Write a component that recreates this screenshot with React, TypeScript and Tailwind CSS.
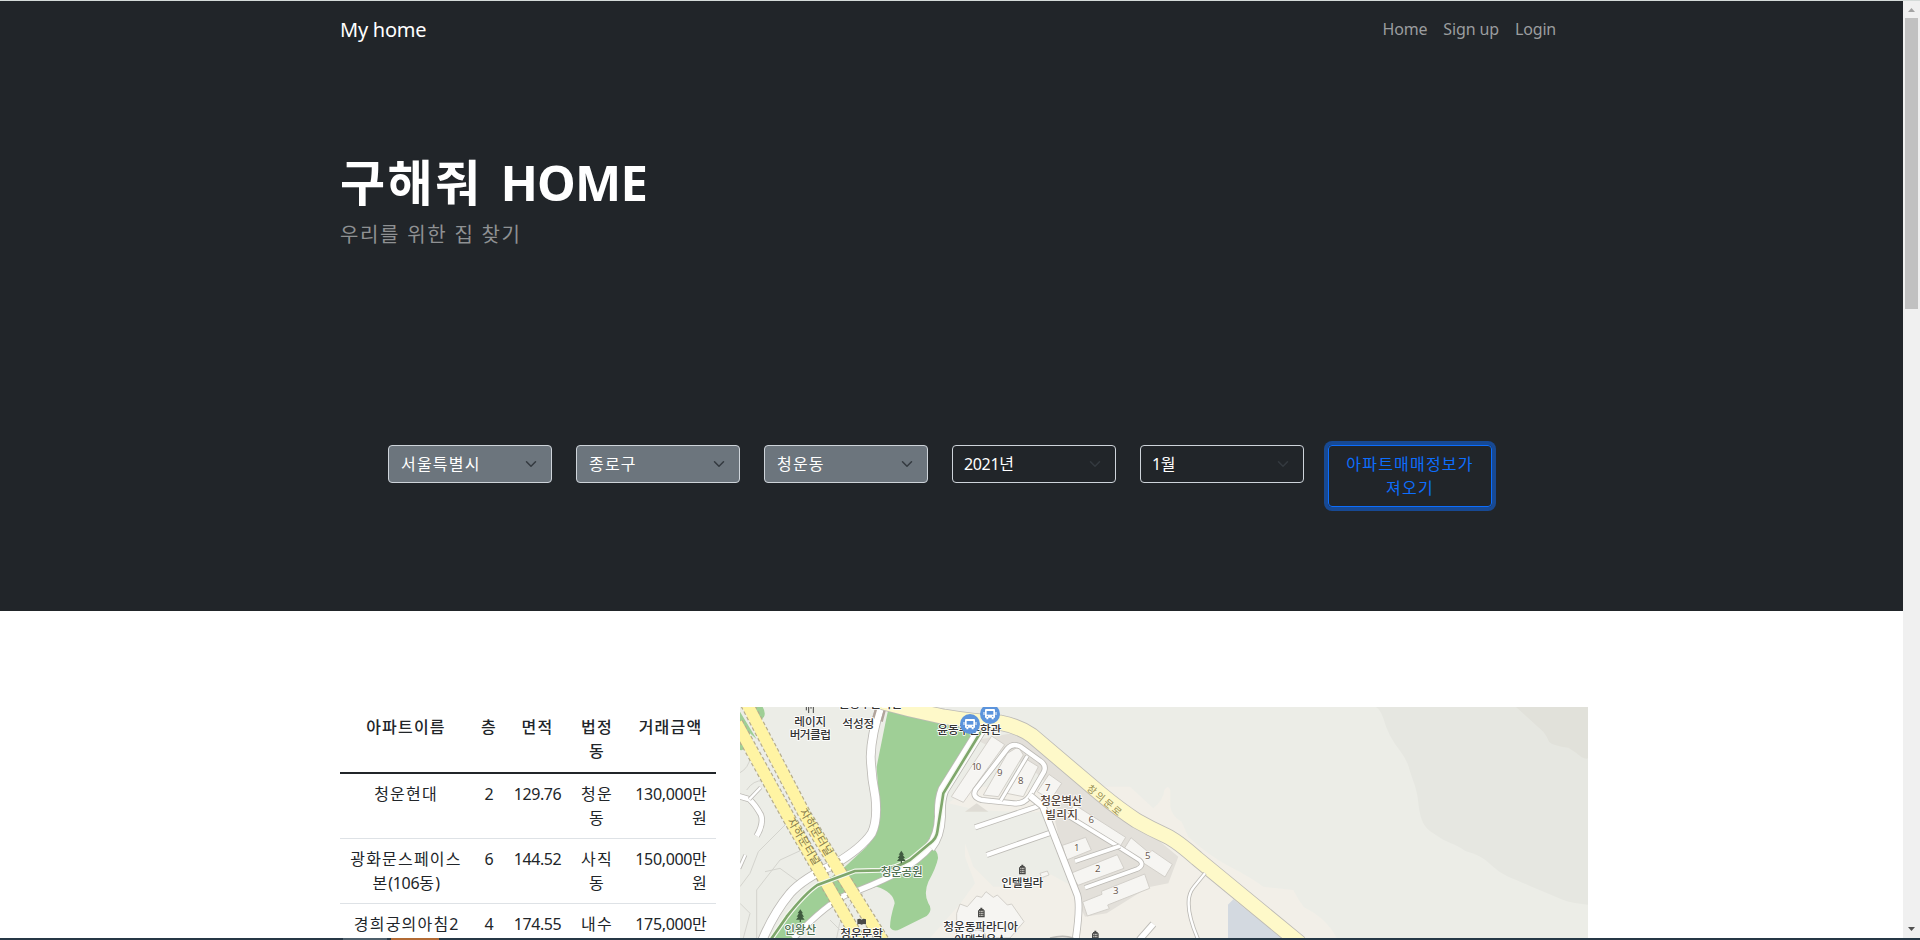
import { Fragment } from "react";

type TProps = { children: string; ko?: string; en?: string };

/* Splits mixed text into Hangul and Latin runs, each with its own tracking. */
function T({ children, ko = "tracking-[1.2px]", en = "tracking-[-0.35px]" }: TProps) {
  const runs = children.match(/[\uac00-\ud7a3]+|[^\uac00-\ud7a3]+/g) ?? [];
  return (
    <>
      {runs.map((r, i) => (
        <span key={i} className={/[\uac00-\ud7a3]/.test(r) ? ko : en}>
          {r}
        </span>
      ))}
    </>
  );
}

function Chevron() {
  return (
    <svg viewBox="0 0 16 16" className="h-3 w-4" fill="none" stroke="#343a40" strokeWidth="2" strokeLinecap="round" strokeLinejoin="round">
      <path d="M2 5l6 6 6-6" />
    </svg>
  );
}

function Select({ label, filled }: { label: string; filled?: boolean }) {
  return (
    <div
      className={
        filled
          ? "flex h-[38px] w-[164px] items-center justify-between rounded border border-[#ced4da] bg-[#6c757d] px-3 text-white"
          : "flex h-[38px] w-[164px] items-center justify-between rounded border border-[#ced4da] pr-3 pl-[11px] text-white"
      }
    >
      <span className="whitespace-nowrap">
        <T>{label}</T>
      </span>
      <Chevron />
    </div>
  );
}

const rows = [
  { name: ["청운현대"], floor: "2", area: "129.76", dong: ["청운", "동"], price: ["130,000만", "원"] },
  { name: ["광화문스페이스", "본(106동)"], floor: "6", area: "144.52", dong: ["사직", "동"], price: ["150,000만", "원"] },
  { name: ["경희궁의아침2"], floor: "4", area: "174.55", dong: ["내수"], price: ["175,000만"] },
];

function Lines({ lines }: { lines: string[] }) {
  return (
    <>
      {lines.map((l, i) => (
        <Fragment key={i}>
          {i > 0 && <br />}
          <T>{l}</T>
        </Fragment>
      ))}
    </>
  );
}

function Road({ d, w, fill = "#ffffff", edge = "#bcbab5" }: { d: string; w: number; fill?: string; edge?: string }) {
  return (
    <g fill="none" strokeLinejoin="round">
      <path d={d} stroke={edge} strokeWidth={w + 5} />
      <path d={d} stroke={fill} strokeWidth={w} />
    </g>
  );
}

function Tunnel({ d }: { d: string }) {
  return (
    <g fill="none">
      <path d={d} stroke="#b5ac8c" strokeWidth="41" strokeDasharray="11 7" />
      <path d={d} stroke="#fff4a3" strokeWidth="34" />
    </g>
  );
}

function Bus({ x, y }: { x: number; y: number }) {
  return (
    <g transform={`translate(${x} ${y})`}>
      <circle r="30" fill="#5c94dc" />
      <path d="M-12 -15h24q3 0 3 4v22h-4v5h-6v-5h-10v5h-6v-5h-4v-22q0-4 3-4z" fill="#fff" />
      <path d="M-18 -6v9M18 -6v9" stroke="#fff" strokeWidth="3" />
      <path d="M-10 -9h20v11h-20z" fill="#5c94dc" />
      <circle cx="-8" cy="7" r="2" fill="#5c94dc" />
      <circle cx="8" cy="7" r="2" fill="#5c94dc" />
    </g>
  );
}

function Apt({ x, y }: { x: number; y: number }) {
  return (
    <g transform={`translate(${x} ${y})`}>
      <path d="M-10 15v-21h3v-4h4v-4h6v4h4v4h3v21z" fill="#4a4a48" />
      <path d="M-6 -3h3M-1.500 -3h3M3 -3h3M-6 3h3M-1.500 3h3M3 3h3M-6 9h3M-1.500 9h3M3 9h3" stroke="#f2efe8" strokeWidth="3" />
    </g>
  );
}

function Tree({ x, y }: { x: number; y: number }) {
  return (
    <path
      transform={`translate(${x} ${y})`}
      d="M0 -19l8 12h-4l7 10h-5l7 9h-11v7h-4v-7h-11l7-9h-5l7-10h-4z"
      fill="#3f5a3f"
    />
  );
}

function MapView() {
  const b = { fill: "#f6f5f2", stroke: "#d3d0ca", strokeWidth: 3 };
  return (
    <svg viewBox="30 21 2544 693" className="block h-[231px] w-[848px] shrink-0" fontFamily='"Noto Sans CJK KR", sans-serif'>
      <rect x="30" y="21" width="2544" height="693" fill="#ecede7" />
      <path d="M1938 21Q1952 30 1960 55Q1975 110 2010 152Q2028 175 2036 200C2045 235 2060 260 2064 300C2070 355 2078 380 2110 400C2150 430 2175 430 2205 452C2225 460 2245 462 2270 483C2320 530 2330 526 2400 558L2500 600Q2525 610 2574 614V21z" fill="#e6e7e1" />
      <path d="M2358 21L2440 95Q2453 112 2457 125Q2470 137 2515 143Q2540 158 2555 172Q2568 178 2574 175V21z" fill="#e1e1da" />
      <path d="M600 714L690 612L735 550L705 470V430L730 500L790 560L900 560L1000 500L960 340L740 330L655 310L720 260H1200L1270 325Q1300 300 1303 270Q1315 252 1321 270V320Q1325 348 1355 365L1375 410Q1440 470 1500 500Q1560 530 1600 560L1690 570Q1705 600 1722 622Q1790 655 1820 714z" fill="#f2efe8" />
      <path d="M740 120L870 95L960 150L1345 470L1315 550L1255 562L1130 640L1065 650L1020 560L970 340L1000 300L900 200z" fill="#e3e0da" />
      <path d="M705 335l35-25l35 25z" fill="#dfdcd5" />
      <path d="M820 345L930 335L975 400L1030 560L920 500L780 460L740 410z" fill="#ecede7" />
      <path d="M1494 614L1510 598L1655 714H1494z" fill="#d3d9e0" />

      <path d="M70 21H98Q108 38 102 50Q92 62 90 60L70 30zM30 35L80 118L60 100L48 145Q38 152 30 150z" fill="#9fcf96" />
      <path d="M475 28L715 72L745 100L634 270L630 380L600 440Q625 450 624 475Q618 505 595 545Q580 580 595 610Q610 630 590 648L510 688Q490 698 480 682Q480 655 494 610Q490 575 440 560L350 585L260 650L200 714H120L170 640L240 580L345 500L410 440L450 350L440 200L468 60z" fill="#9fcf96" />

      <g fill="none" stroke="#d4d4ce" strokeWidth="3">
        <path d="M30 218Q55 205 62 170M50 270Q70 240 100 242M190 350L85 455L60 520L30 560M215 450L150 480L80 570V714M205 545L150 505L105 515M30 610L60 640L40 714M400 580Q330 620 320 714M300 660L330 690" />
      </g>

      <Road d="M455 10Q424 100 422 170Q424 230 436 290Q444 360 425 400Q395 445 310 495Q220 535 180 580Q130 640 95 725" w={24} />
      <Road d="M605 438Q570 480 500 520Q420 560 350 584Q290 612 190 715" w={16} />
      <Road d="M752 90L640 270Q628 300 630 350Q628 410 600 442" w={30} />
      <path d="M468 15L455 65M440 21L430 55" stroke="#b1a49b" strokeWidth="7" />
      <Tunnel d="M20 70L180 360L275 525L390 725" />
      <Tunnel d="M50 10L225 345L320 500L460 725" />
      <g fill="none" strokeLinejoin="round">
        <path d="M765 75L640 280L622 395Q620 415 600 430L540 480Q500 503 450 511L375 513L262 555Q225 580 170 650L120 722" stroke="#f4f8ef" strokeWidth="15" />
        <path d="M765 75L640 280L622 395Q620 415 600 430L540 480Q500 503 450 511L375 513L262 555Q225 580 170 650L120 722" stroke="#7fa76c" strokeWidth="8" />
      </g>
      <Road d="M440 2Q540 30 640 50Q740 67 810 68Q865 78 905 106L1110 280Q1170 330 1220 362Q1260 385 1310 408Q1340 422 1400 475L1710 730" w={43} fill="#fef9c9" />

      <path d="M785 108L824 134L700 307L664 290z" {...b} />
      <path d="M832 160L865 140L880 165L805 290L760 285z" {...b} />
      <path d="M885 175L925 200L880 290L830 280z" {...b} />
      <path d="M957 223L995 250L962 300L922 275z" {...b} />
      <path d="M1035 315L1187 412L1170 440L1002 345z" {...b} />
      <path d="M1203 413L1258 459L1266 451L1327 493L1305 531L1180 450z" {...b} />
      <path d="M997 436L1067 412L1084 450L1010 480z" {...b} />
      <path d="M1022 520L1162 464L1182 505L1044 556z" {...b} />
      <path d="M1058 606L1116 583L1114 574L1244 522L1259 565L1133 615L1138 626L1072 648z" {...b} />
      <path d="M930 520l22-7 5 12-22 8z" {...b} />
      <path d="M680 640L690 612L712 620L740 588L755 592L768 575L790 592L802 585L832 615L845 612L882 665L840 714H680z" {...b} />
      <circle cx="742" cy="712" r="24" fill="none" stroke="#c9c7c2" strokeWidth="5" />

      <Road d="M736 270L832 146Q848 128 872 140L930 182Q950 195 942 215L898 290Q880 314 850 310L755 300Q725 292 736 270z" w={13} />
      <Road d="M892 168L812 302" w={9} />
      <Road d="M735 382L935 315" w={13} />
      <Road d="M770 465L965 397" w={13} />
      <Road d="M1010 345L1165 440L1228 480Q1245 495 1222 507L1065 563" w={11} />
      <Road d="M1035 484L1170 438" w={11} />
      <Road d="M900 287L938 318L1042 585Q1052 620 1036 725" w={18} />
      <Road d="M1425 520L1392 560Q1375 580 1376 610Q1375 650 1405 720" w={7} />
      <Road d="M1270 672L1228 720" w={17} />
      <Road d="M25 288L58 298Q75 312 93 345Q102 370 80 408" w={14} />
      <Road d="M58 298L92 262" w={7} />
      <Road d="M28 505L46 465" w={7} />
      <path d="M960 714Q1000 704 1030 714" fill="none" stroke="#bcbab5" strokeWidth="5" />

      <g fontSize="33" fill="#85794a" textAnchor="middle">
        <g transform="translate(259 396) rotate(59)">
          <text y="12" textLength="158">자하문터널</text>
        </g>
        <g transform="translate(222 424) rotate(59)">
          <text y="12" textLength="158">자하문터널</text>
        </g>
        <g transform="translate(1123 301) rotate(40)" fontSize="29" fill="#938a4d">
          <text y="10" textLength="125">창의문로</text>
        </g>
      </g>

      <path d="M229 21v10M236 21v18M250 21v18M243 21v5" fill="none" stroke="#444" strokeWidth="3" />
      <path d="M382 658q8-4 13 1q5-5 13-1v15q-8-3-13 1q-5-4-13-1z" fill="#4a4a48" />
      <Tree x={514} y={471} />
      <Tree x={211} y={647} />
      <Apt x={877} y={508} />
      <Apt x={754} y={637} />
      <Apt x={1096} y={706} />

      <g fontSize="35" fontWeight="500" fill="#333" stroke="#fff" strokeWidth="5" strokeLinejoin="round" paintOrder="stroke" textAnchor="middle">
        <text x="422" y="25" textLength="190">윤동주문학관</text>
        <text x="241" y="79" textLength="96">레이지</text>
        <text x="241" y="117" textLength="124">버거클럽</text>
        <text x="385" y="83" textLength="96">석성정</text>
        <text x="718" y="101" textLength="192">윤동주문학관</text>
        <text x="515" y="527" textLength="126" fill="#4d7050">청운공원</text>
        <text x="211" y="702" textLength="96" fill="#4d7050">인왕산</text>
        <text x="395" y="715" textLength="128">청운문학</text>
        <text x="877" y="562" textLength="126">인텔빌라</text>
        <text x="752" y="692" textLength="224">청운동파라디아</text>
        <text x="752" y="731" textLength="158">아델하우스</text>
        <text x="994" y="314" textLength="126" fill="#54463c">청운벽산</text>
        <text x="995" y="356" textLength="98" fill="#54463c">빌리지</text>
      </g>
      <g fontSize="29" fill="#6b5a50" stroke="#fff" strokeWidth="3" paintOrder="stroke" textAnchor="middle" fontFamily='"Noto Sans", sans-serif'>
        <text x="739" y="210" textLength="29">10</text>
        <text x="809" y="228">9</text>
        <text x="872" y="252">8</text>
        <text x="953" y="273">7</text>
        <text x="1084" y="369">6</text>
        <text x="1040" y="453">1</text>
        <text x="1103" y="516">2</text>
        <text x="1157" y="582">3</text>
        <text x="1253" y="477">5</text>
      </g>
      <Bus x={780} y={42} />
      <Bus x={720} y={72} />
    </svg>
  );
}

export default function App() {
  return (
    <div className="flex h-[940px] w-[1920px] flex-col overflow-hidden bg-white font-['Noto_Sans','Noto_Sans_CJK_KR',sans-serif] text-base leading-6 text-[#212529]">
      <div className="h-px shrink-0 bg-[#d5dbd9]" />
      <div className="flex h-[937px] shrink-0">
        <div className="flex w-[1903px] flex-col overflow-hidden">
          <header className="h-[610px] shrink-0 bg-[#212529] px-[340px]">
            <nav className="flex h-14 items-center justify-between pr-[7px]">
              <a className="pt-[2px] text-[20px] leading-[30px] text-white">
                <T en="tracking-[-0.25px]">My home</T>
              </a>
              <div className="flex gap-4 text-[#9b9d9f]">
                <a><T en="tracking-[-0.2px]">Home</T></a>
                <a><T en="tracking-[-0.1px]">Sign up</T></a>
                <a><T en="tracking-[-0.2px]">Login</T></a>
              </div>
            </nav>
            <h1 className="mt-[96px] text-[49px] leading-[58px] font-bold text-white">
              <T ko="tracking-[2.4px]" en="tracking-[-0.8px] [word-spacing:6px]">구해줘 HOME</T>
            </h1>
            <p className="mt-[9px] text-[20px] leading-[30px] text-[#8f9193]">
              <T ko="tracking-[1.6px]" en="tracking-[2px]">우리를 위한 집 찾기</T>
            </p>
            <div className="mt-[195px] ml-12 flex items-start gap-6">
              <Select label="서울특별시" filled />
              <Select label="종로구" filled />
              <Select label="청운동" filled />
              <Select label="2021년" />
              <Select label="1월" />
              <button className="h-[62px] w-[164px] rounded border border-[#0d6efd] text-center leading-6 text-[#0d6efd] shadow-[0_0_0_4px_rgba(13,110,253,0.5)]">
                <Lines lines={["아파트매매정보가", "져오기"]} />
              </button>
            </div>
          </header>
          <main className="mt-24 ml-[340px] flex items-start gap-6">
            <table className="w-[376px] shrink-0 table-fixed border-collapse text-center">
              <colgroup>
                <col className="w-[132px]" />
                <col className="w-[34px]" />
                <col className="w-[63px]" />
                <col className="w-[56px]" />
                <col className="w-[91px]" />
              </colgroup>
              <thead>
                <tr className="h-[66px] border-b-2 border-[#212529] align-top">
                  {[["아파트이름"], ["층"], ["면적"], ["법정", "동"], ["거래금액"]].map((h, i) => (
                    <th key={i} className="pt-2 font-medium whitespace-nowrap">
                      <Lines lines={h} />
                    </th>
                  ))}
                </tr>
              </thead>
              <tbody>
                {rows.map((r) => (
                  <tr key={r.area} className="h-[65px] border-b border-[#dee2e6] align-top whitespace-nowrap">
                    <td className="pt-2"><Lines lines={r.name} /></td>
                    <td className="pt-2"><T>{r.floor}</T></td>
                    <td className="pt-2"><T en="tracking-[-0.45px]">{r.area}</T></td>
                    <td className="pt-2"><Lines lines={r.dong} /></td>
                    <td className="pt-2 pr-2 text-right"><Lines lines={r.price} /></td>
                  </tr>
                ))}
              </tbody>
            </table>
            <MapView />
          </main>
        </div>
        <div className="flex w-[17px] flex-col items-center justify-between bg-[#f0f0f0]">
          <div className="flex flex-col items-center">
            <svg viewBox="0 0 17 17" className="h-[17px] w-[17px]"><path d="M5 11h7L8.500 7z" fill="#a3a3a3" /></svg>
            <div className="h-[291px] w-[13px] bg-[#c1c1c1]" />
          </div>
          <svg viewBox="0 0 17 17" className="h-[17px] w-[17px]"><path d="M5 6h7L8.500 10z" fill="#505050" /></svg>
        </div>
      </div>
      <div className="flex h-[2px] shrink-0 bg-[#263846] pl-[343px]">
        <div className="w-11 bg-[#4e5f6b]" />
        <div className="ml-1 w-12 bg-[#b16a34]" />
      </div>
    </div>
  );
}
